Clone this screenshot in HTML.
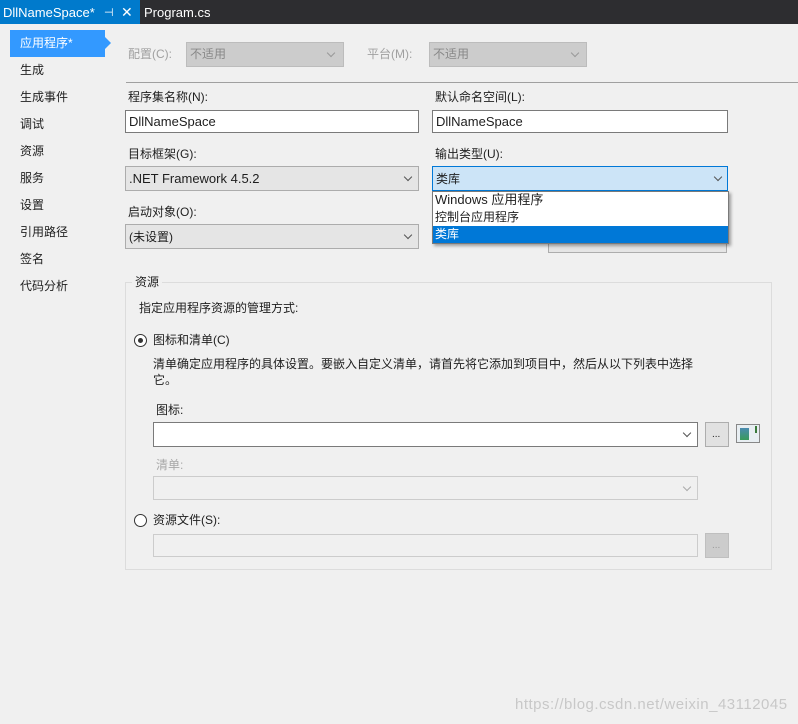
<!DOCTYPE html>
<html><head><meta charset="utf-8"><style>
*{box-sizing:border-box;margin:0;padding:0}
body{width:798px;height:724px;background:#f0f0f0;position:relative;overflow:hidden;font-family:"Liberation Sans","Noto Sans CJK SC",sans-serif;font-size:12px;color:#1e1e1e}
.a{position:absolute;white-space:nowrap}
.t{line-height:16px}
.box{position:absolute;border:1px solid #7a7a7a;background:#fff}
.chev{position:absolute;width:6px;height:6px;border-right:1px solid #555;border-bottom:1px solid #555;transform:rotate(45deg)}
.g{color:#a0a0a0}
</style></head><body>
<div class="a" style="left:0;top:0;width:798px;height:24px;background:#2d2d30"></div>
<div class="a" style="left:0;top:0;width:140px;height:24px;background:#007acc"></div>
<div class="a t" style="left:3px;top:5px;color:#fff;font-size:13px">DllNameSpace*</div>
<div class="a t" style="left:104px;top:5px;color:#fff;font-size:11px">⊣</div>
<div class="a t" style="left:121px;top:4px;color:#fff;font-size:14px">✕</div>
<div class="a t" style="left:144px;top:5px;color:#fff;font-size:13px">Program.cs</div>

<div class="a" style="left:10px;top:30px;width:95px;height:27px;background:#3399ff"></div>
<div class="a" style="left:105px;top:37px;width:0;height:0;border-top:6px solid transparent;border-bottom:6px solid transparent;border-left:6px solid #3399ff"></div>
<div class="a t" style="left:20px;top:35px;color:#fff">应用程序*</div>
<div class="a t" style="left:20px;top:62px">生成</div>
<div class="a t" style="left:20px;top:89px">生成事件</div>
<div class="a t" style="left:20px;top:116px">调试</div>
<div class="a t" style="left:20px;top:143px">资源</div>
<div class="a t" style="left:20px;top:170px">服务</div>
<div class="a t" style="left:20px;top:197px">设置</div>
<div class="a t" style="left:20px;top:224px">引用路径</div>
<div class="a t" style="left:20px;top:251px">签名</div>
<div class="a t" style="left:20px;top:278px">代码分析</div>

<div class="a t g" style="left:128px;top:46px">配置(C):</div>
<div class="box" style="left:186px;top:42px;width:158px;height:25px;background:#ccc;border-color:#bcbcbc"></div>
<div class="a t g" style="left:190px;top:46px;color:#888">不适用</div>
<div class="chev" style="left:328px;top:50px;border-color:#999"></div>
<div class="a t g" style="left:367px;top:46px">平台(M):</div>
<div class="box" style="left:429px;top:42px;width:158px;height:25px;background:#ccc;border-color:#bcbcbc"></div>
<div class="a t g" style="left:433px;top:46px;color:#888">不适用</div>
<div class="chev" style="left:572px;top:50px;border-color:#999"></div>
<div class="a" style="left:126px;top:82px;width:672px;height:1px;background:#a0a0a0"></div>

<div class="a t" style="left:128px;top:89px">程序集名称(N):</div>
<div class="box" style="left:125px;top:110px;width:294px;height:23px"></div>
<div class="a t" style="left:129px;top:114px;font-size:13px">DllNameSpace</div>
<div class="a t" style="left:435px;top:89px">默认命名空间(L):</div>
<div class="box" style="left:432px;top:110px;width:296px;height:23px"></div>
<div class="a t" style="left:436px;top:114px;font-size:13px">DllNameSpace</div>

<div class="a t" style="left:128px;top:146px">目标框架(G):</div>
<div class="box" style="left:125px;top:166px;width:294px;height:25px;background:#e5e5e5;border-color:#acacac"></div>
<div class="a t" style="left:129px;top:171px;font-size:13px">.NET Framework 4.5.2</div>
<div class="chev" style="left:405px;top:174px"></div>
<div class="a t" style="left:435px;top:146px">输出类型(U):</div>
<div class="box" style="left:432px;top:166px;width:296px;height:25px;background:#cce4f7;border-color:#0078d7"></div>
<div class="a t" style="left:436px;top:171px">类库</div>
<div class="chev" style="left:715px;top:174px"></div>

<div class="a t" style="left:128px;top:204px">启动对象(O):</div>
<div class="box" style="left:125px;top:224px;width:294px;height:25px;background:#e5e5e5;border-color:#acacac"></div>
<div class="a t" style="left:129px;top:229px">(未设置)</div>
<div class="chev" style="left:405px;top:232px"></div>
<div class="box" style="left:548px;top:228px;width:179px;height:25px;background:#e5e5e5;border-color:#adadad"></div>

<div class="a" style="left:432px;top:191px;width:297px;height:53px;background:#fff;border:1px solid #7a7a7a;box-shadow:2px 2px 3px rgba(0,0,0,.35)"></div>
<div class="a t" style="left:435px;top:192px;font-size:13px">Windows 应用程序</div>
<div class="a t" style="left:435px;top:209px">控制台应用程序</div>
<div class="a" style="left:433px;top:226px;width:295px;height:17px;background:#0078d7"></div>
<div class="a t" style="left:435px;top:226px;color:#fff">类库</div>

<div class="a" style="left:125px;top:282px;width:647px;height:288px;border:1px solid #dcdcdc"></div>
<div class="a t" style="left:132px;top:274px;background:#f0f0f0;padding:0 3px">资源</div>
<div class="a t" style="left:139px;top:300px">指定应用程序资源的管理方式:</div>
<div class="a" style="left:134px;top:334px;width:13px;height:13px;border:1px solid #333;border-radius:50%;background:#fff"></div>
<div class="a" style="left:138px;top:338px;width:5px;height:5px;border-radius:50%;background:#333"></div>
<div class="a t" style="left:153px;top:332px">图标和清单(C)</div>
<div class="a t" style="left:153px;top:356px">清单确定应用程序的具体设置。要嵌入自定义清单，请首先将它添加到项目中，然后从以下列表中选择</div>
<div class="a t" style="left:153px;top:372px">它。</div>
<div class="a t" style="left:156px;top:402px">图标:</div>
<div class="box" style="left:153px;top:422px;width:545px;height:25px"></div>
<div class="chev" style="left:684px;top:430px"></div>
<div class="box" style="left:705px;top:422px;width:24px;height:25px;background:#e1e1e1;border-color:#adadad"></div>
<div class="a t" style="left:712px;top:427px;font-size:10px">...</div>
<div class="a" style="left:736px;top:424px;width:24px;height:19px;border:1px solid #888;background:#e8eef2"></div>
<div class="a" style="left:740px;top:428px;width:9px;height:12px;background:linear-gradient(#4a8ab0,#3a9a5a)"></div>
<div class="a" style="left:755px;top:426px;width:2px;height:7px;background:#3a7a3a"></div>
<div class="a t g" style="left:156px;top:457px;color:#a8a8a8">清单:</div>
<div class="box" style="left:153px;top:476px;width:545px;height:24px;background:#f0f0f0;border-color:#ccc"></div>
<div class="chev" style="left:684px;top:484px;border-color:#aaa"></div>
<div class="a" style="left:134px;top:514px;width:13px;height:13px;border:1px solid #333;border-radius:50%;background:#fff"></div>
<div class="a t" style="left:153px;top:512px">资源文件(S):</div>
<div class="box" style="left:153px;top:534px;width:545px;height:23px;background:#f0f0f0;border-color:#ccc"></div>
<div class="box" style="left:705px;top:533px;width:24px;height:25px;background:#ccc;border-color:#bfbfbf"></div>
<div class="a t" style="left:712px;top:538px;font-size:10px;color:#999">...</div>

<div class="a t" style="left:515px;top:697px;font-size:15px;letter-spacing:.5px;color:#c8c8c8">https://blog.csdn.net/weixin_43112045</div>
</body></html>
